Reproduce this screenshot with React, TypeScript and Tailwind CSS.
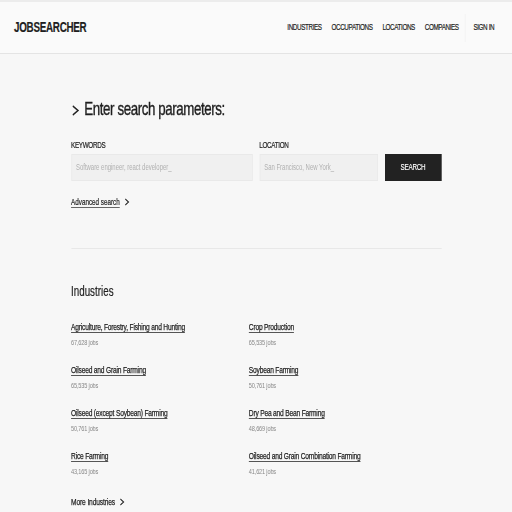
import React from "react";

// The design uses a condensed face; we have none installed, so the page is laid
// out at 732px and squeezed horizontally to fit the 512px frame.
const font = { fontFamily: "'Liberation Sans', Arial, sans-serif" };

const navItems = ["INDUSTRIES", "OCCUPATIONS", "LOCATIONS", "COMPANIES"];

const industries = [
  { name: "Agriculture, Forestry, Fishing and Hunting", jobs: "67,628 jobs" },
  { name: "Crop Production", jobs: "65,535 jobs" },
  { name: "Oilseed and Grain Farming", jobs: "65,535 jobs" },
  { name: "Soybean Farming", jobs: "50,761 jobs" },
  { name: "Oilseed (except Soybean) Farming", jobs: "50,761 jobs" },
  { name: "Dry Pea and Bean Farming", jobs: "48,669 jobs" },
  { name: "Rice Farming", jobs: "43,165 jobs" },
  { name: "Oilseed and Grain Combination Farming", jobs: "41,621 jobs" },
];

function Chevron() {
  return (
    <svg width="9" height="8" viewBox="0 0 9 8" className="inline-block ml-[6px]">
      <path d="M2 1 L6.5 4 L2 7" fill="none" stroke="#222" strokeWidth="1.3" />
    </svg>
  );
}

export default function App() {
  return (
    <div className="w-[512px] min-h-screen overflow-hidden bg-[#f7f7f7]">
      <div className="w-[732px] origin-top-left scale-x-[0.7] text-[#1e1e1e]" style={font}>
        {/* Header */}
        <header className="h-[54px] bg-[#fafafa] border-t-2 border-[#ececec] border-b border-b-[#e4e4e4] flex items-center justify-between pl-[20px] pr-[26px]">
          <div className="text-[14px] font-bold tracking-[-0.025em] [-webkit-text-stroke:0.2px_#222]">JOBSEARCHER</div>
          <nav className="flex items-center text-[9px] tracking-[-0.06em] [-webkit-text-stroke:0.2px_#222]">
            {navItems.map((n) => (
              <a key={n} className="ml-[14px]">
                {n}
              </a>
            ))}
            <span className="ml-[9px] mr-[11px] w-px h-[28px] bg-[#f0f0f0]" />
            <a>SIGN IN</a>
          </nav>
        </header>

        <main className="w-[529px] mx-auto pt-[43px]">
          {/* Search */}
          <h1 className="text-[19px] leading-[24px] tracking-[-0.03em] flex items-center [-webkit-text-stroke:0.4px_#1e1e1e]">
            <svg width="12" height="12" viewBox="0 0 12 12" className="mr-[7px] mt-[2px]">
              <path d="M2 2 L9.5 6.5 L2 11" fill="none" stroke="#222" strokeWidth="1.6" />
            </svg>
            Enter search parameters:
          </h1>

          <div className="flex gap-[10px] mt-[18px] items-end">
            <div className="w-[259px]">
              <label className="block text-[9px] leading-[12px] tracking-[-0.05em] mb-[3px] [-webkit-text-stroke:0.2px_#222]">
                KEYWORDS
              </label>
              <div className="h-[27px] bg-[#f0f0f0] border border-[#e9e9e9] flex items-center px-[6px] text-[8.5px] text-[#b0b0b0]">
                Software engineer, react developer_
              </div>
            </div>
            <div className="w-[169px]">
              <label className="block text-[9px] leading-[12px] tracking-[-0.05em] mb-[3px] [-webkit-text-stroke:0.2px_#222]">
                LOCATION
              </label>
              <div className="h-[27px] bg-[#f0f0f0] border border-[#e9e9e9] flex items-center px-[6px] text-[8.5px] text-[#b0b0b0]">
                San Francisco, New York_
              </div>
            </div>
            <button className="flex-1 h-[27px] bg-[#222] text-white text-[9px] tracking-[-0.04em] flex items-center justify-center [-webkit-text-stroke:0.15px_#fff]">
              SEARCH
            </button>
          </div>

          <div className="mt-[14px] text-[9px] leading-[14px] flex items-center [-webkit-text-stroke:0.2px_#222]">
            <span className="underline underline-offset-2 decoration-[#666]">Advanced search</span>
            <Chevron />
          </div>

          <div className="mt-[39px] h-px bg-[#e8e8e8]" />

          {/* Industries */}
          <h2 className="mt-[33px] text-[14px] leading-[18px] [-webkit-text-stroke:0.2px_#222]">Industries</h2>

          <div className="grid grid-cols-[254px_1fr] gap-y-[16px] mt-[21px]">
            {industries.map((i) => (
              <div key={i.name} className="flex flex-col">
                <a className="text-[9.5px] leading-[12px] tracking-[-0.03em] underline underline-offset-2 decoration-[#555] w-fit [-webkit-text-stroke:0.25px_#222]">
                  {i.name}
                </a>
                <span className="mt-[5px] text-[8px] leading-[10px] text-[#888] tracking-[-0.03em]">{i.jobs}</span>
              </div>
            ))}
          </div>

          <div className="mt-[19px] text-[9.5px] leading-[12px] tracking-[-0.02em] flex items-center [-webkit-text-stroke:0.25px_#222]">
            More Industries
            <Chevron />
          </div>
        </main>
      </div>
    </div>
  );
}
